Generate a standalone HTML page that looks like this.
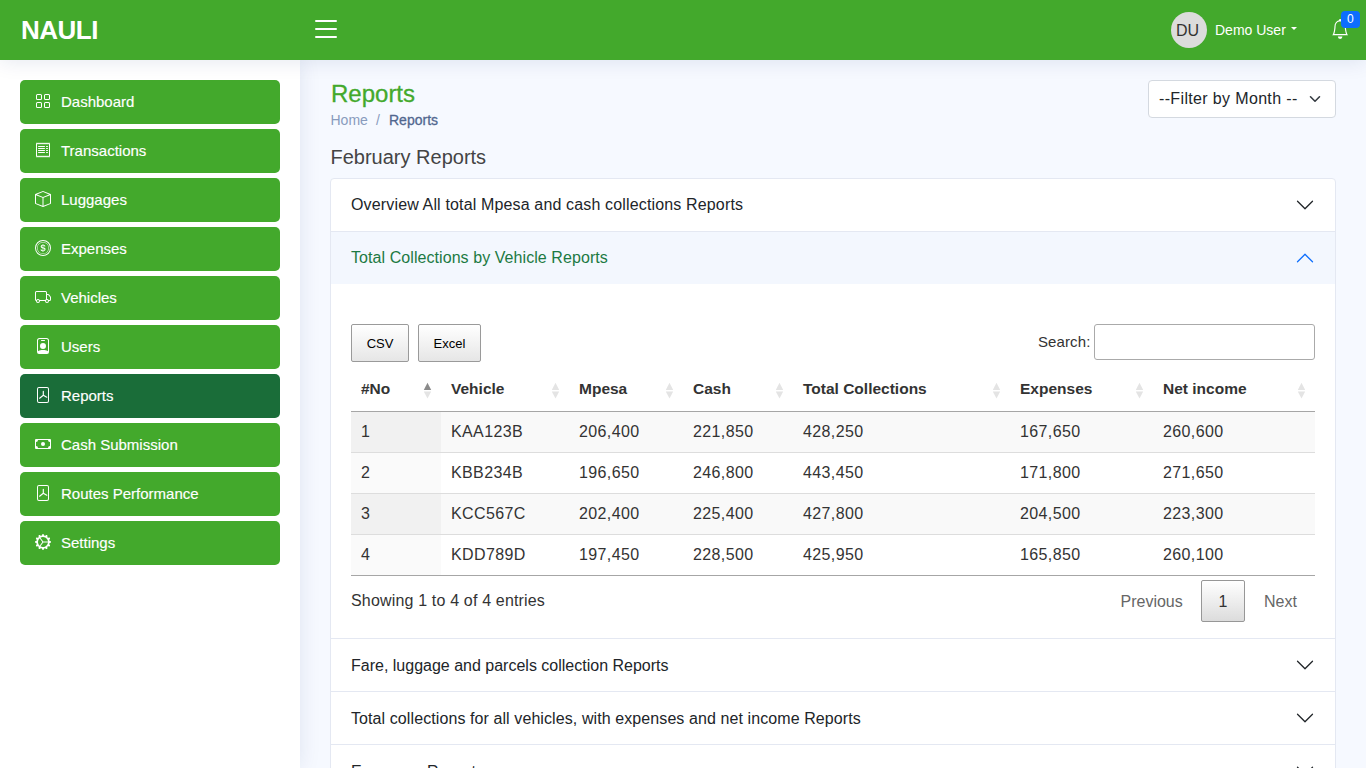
<!DOCTYPE html>
<html>
<head>
<meta charset="utf-8">
<style>
*{box-sizing:border-box;margin:0;padding:0}
html,body{width:1366px;height:768px;overflow:hidden}
body{font-family:"Liberation Sans",sans-serif;background:#f6f9ff;color:#212529;position:relative}
.abs{position:absolute}
.t{position:absolute;white-space:nowrap;line-height:1}
/* header */
#hdr{position:absolute;left:0;top:0;width:1366px;height:60px;background:#43a92c;box-shadow:0 2px 20px rgba(1,41,112,.1);z-index:5}
/* sidebar */
#side{position:absolute;left:0;top:60px;width:300px;height:708px;background:#fff;box-shadow:0 0 20px rgba(1,41,112,.1);z-index:3}
.nav{position:absolute;left:20px;width:260px;height:44px;background:#43a92c;border-radius:5px;color:#fff}
.nav.act{background:#1a6d39}
.nav svg{position:absolute;left:15px;top:13px;width:16px;height:16px}
.nav span{position:absolute;left:41px;top:14px;-webkit-text-stroke:0.15px #fff;font-size:15px;line-height:1;white-space:nowrap}
#main{position:absolute;left:300px;top:60px;width:1066px;height:708px}

#mainc{position:absolute;left:0;top:0;width:1366px;height:768px;z-index:1}
.btn{position:absolute;top:324px;height:38px;border:1px solid #9a9a9a;border-radius:2px;background:linear-gradient(#fff,#e6e6e6);font-size:13px;color:#000;text-align:center;line-height:37px}
.th{top:380.8px;font-size:15.5px;font-weight:bold;color:#333}
.td{font-size:16px;color:#333;letter-spacing:0.38px}
</style>
</head>
<body>
<div id="hdr">
  <div class="t" style="left:21px;top:17px;font-size:26px;font-weight:bold;color:#fff;letter-spacing:-0.5px">NAULI</div>
  <div class="abs" style="left:315px;top:20px;width:22px;height:2px;background:#fff;border-radius:1px"></div>
  <div class="abs" style="left:315px;top:28px;width:22px;height:2px;background:#fff;border-radius:1px"></div>
  <div class="abs" style="left:315px;top:36px;width:22px;height:2px;background:#fff;border-radius:1px"></div>
  <div class="abs" style="left:1171px;top:12px;width:36px;height:36px;border-radius:50%;background:#dcdcdc"></div>
  <div class="t" style="left:1176px;top:23px;font-size:16px;color:#333">DU</div>
  <div class="t" style="left:1215px;top:23px;font-size:14px;color:#fff">Demo User</div>
  <div class="abs" style="left:1290.5px;top:27.2px;width:0;height:0;border-left:3.6px solid transparent;border-right:3.6px solid transparent;border-top:3.6px solid #fff"></div>
  <svg class="abs" style="left:1330.86px;top:18.9px" width="18.3" height="19.9" viewBox="0 0 16 16" preserveAspectRatio="none"><path fill="#fff" d="M8 16a2 2 0 0 0 2-2H6a2 2 0 0 0 2 2zM8 1.918l-.797.161A4.002 4.002 0 0 0 4 6c0 .628-.134 2.197-.459 3.742-.16.767-.376 1.566-.663 2.258h10.244c-.287-.692-.502-1.49-.663-2.258C12.134 8.197 12 6.628 12 6a4.002 4.002 0 0 0-3.203-3.92L8 1.917zM14.22 12c.223.447.481.801.78 1H1c.299-.199.557-.553.78-1C2.68 10.2 3 6.88 3 6c0-2.42 1.72-4.44 4.005-4.901a1 1 0 1 1 1.99 0A5.002 5.002 0 0 1 13 6c0 .88.32 4.2 1.22 6z"/></svg>
  <div class="abs" style="left:1341px;top:11px;width:19px;height:17px;border-radius:4px;background:#0d6efd"></div>
  <div class="t" style="left:1347px;top:13px;font-size:12px;color:#fff">0</div>
</div>

<div id="side">
  <div class="nav" style="top:20px"><svg viewBox="0 0 16 16" fill="#fff"><path d="M1 2.5A1.5 1.5 0 0 1 2.5 1h3A1.5 1.5 0 0 1 7 2.5v3A1.5 1.5 0 0 1 5.5 7h-3A1.5 1.5 0 0 1 1 5.5v-3zM2.5 2a.5.5 0 0 0-.5.5v3a.5.5 0 0 0 .5.5h3a.5.5 0 0 0 .5-.5v-3a.5.5 0 0 0-.5-.5h-3zm6.5.5A1.5 1.5 0 0 1 10.5 1h3A1.5 1.5 0 0 1 15 2.5v3A1.5 1.5 0 0 1 13.5 7h-3A1.5 1.5 0 0 1 9 5.5v-3zm1.5-.5a.5.5 0 0 0-.5.5v3a.5.5 0 0 0 .5.5h3a.5.5 0 0 0 .5-.5v-3a.5.5 0 0 0-.5-.5h-3zM1 10.5A1.5 1.5 0 0 1 2.5 9h3A1.5 1.5 0 0 1 7 10.5v3A1.5 1.5 0 0 1 5.5 15h-3A1.5 1.5 0 0 1 1 13.5v-3zm1.5-.5a.5.5 0 0 0-.5.5v3a.5.5 0 0 0 .5.5h3a.5.5 0 0 0 .5-.5v-3a.5.5 0 0 0-.5-.5h-3zm6.5.5A1.5 1.5 0 0 1 10.5 9h3a1.5 1.5 0 0 1 1.5 1.5v3a1.5 1.5 0 0 1-1.5 1.5h-3A1.5 1.5 0 0 1 9 13.5v-3zm1.5-.5a.5.5 0 0 0-.5.5v3a.5.5 0 0 0 .5.5h3a.5.5 0 0 0 .5-.5v-3a.5.5 0 0 0-.5-.5h-3z"/></svg><span>Dashboard</span></div>
  <div class="nav" style="top:69px"><svg viewBox="0 0 16 16" fill="#fff"><path d="M1.92.506a.5.5 0 0 1 .434.14L3 1.293l.646-.647a.5.5 0 0 1 .708 0L5 1.293l.646-.647a.5.5 0 0 1 .708 0L7 1.293l.646-.647a.5.5 0 0 1 .708 0L9 1.293l.646-.647a.5.5 0 0 1 .708 0l.646.647.646-.647a.5.5 0 0 1 .708 0l.646.647.646-.647a.5.5 0 0 1 .801.13l.5 1A.5.5 0 0 1 15 2v12a.5.5 0 0 1-.053.224l-.5 1a.5.5 0 0 1-.8.13L13 14.707l-.646.647a.5.5 0 0 1-.708 0L11 14.707l-.646.647a.5.5 0 0 1-.708 0L9 14.707l-.646.647a.5.5 0 0 1-.708 0L7 14.707l-.646.647a.5.5 0 0 1-.708 0L5 14.707l-.646.647a.5.5 0 0 1-.708 0L3 14.707l-.646.647a.5.5 0 0 1-.801-.13l-.5-1A.5.5 0 0 1 1 14V2a.5.5 0 0 1 .053-.224l.5-1a.5.5 0 0 1 .367-.27zm.217 1.338L2 2.118v11.764l.137.274.51-.51a.5.5 0 0 1 .707 0l.646.647.646-.646a.5.5 0 0 1 .708 0l.646.646.646-.646a.5.5 0 0 1 .708 0l.646.646.646-.646a.5.5 0 0 1 .708 0l.646.646.646-.646a.5.5 0 0 1 .708 0l.646.646.646-.646a.5.5 0 0 1 .708 0l.509.509.137-.274V2.118l-.137-.274-.51.51a.5.5 0 0 1-.707 0L12 1.707l-.646.647a.5.5 0 0 1-.708 0L10 1.707l-.646.647a.5.5 0 0 1-.708 0L8 1.707l-.646.647a.5.5 0 0 1-.708 0L6 1.707l-.646.647a.5.5 0 0 1-.708 0L4 1.707l-.646.647a.5.5 0 0 1-.708 0l-.509-.51zM3 4.5a.5.5 0 0 1 .5-.5h6a.5.5 0 1 1 0 1h-6a.5.5 0 0 1-.5-.5zm0 2a.5.5 0 0 1 .5-.5h6a.5.5 0 1 1 0 1h-6a.5.5 0 0 1-.5-.5zm0 2a.5.5 0 0 1 .5-.5h6a.5.5 0 1 1 0 1h-6a.5.5 0 0 1-.5-.5zm0 2a.5.5 0 0 1 .5-.5h6a.5.5 0 0 1 0 1h-6a.5.5 0 0 1-.5-.5zm8-6a.5.5 0 0 1 .5-.5h1a.5.5 0 0 1 0 1h-1a.5.5 0 0 1-.5-.5zm0 2a.5.5 0 0 1 .5-.5h1a.5.5 0 0 1 0 1h-1a.5.5 0 0 1-.5-.5zm0 2a.5.5 0 0 1 .5-.5h1a.5.5 0 0 1 0 1h-1a.5.5 0 0 1-.5-.5zm0 2a.5.5 0 0 1 .5-.5h1a.5.5 0 0 1 0 1h-1a.5.5 0 0 1-.5-.5z"/></svg><span>Transactions</span></div>
  <div class="nav" style="top:118px"><svg viewBox="0 0 16 16" fill="#fff"><path d="M8.186 1.113a.5.5 0 0 0-.372 0L1.846 3.5 8 5.961 14.154 3.5 8.186 1.113zM15 4.239l-6.5 2.6v7.922l6.5-2.6V4.24zM7.5 14.762V6.838L1 4.239v7.923l6.5 2.6zM7.443.184a1.5 1.5 0 0 1 1.114 0l7.129 2.852A.5.5 0 0 1 16 3.5v8.662a1 1 0 0 1-.629.928l-7.185 2.874a.5.5 0 0 1-.372 0L.63 13.09a1 1 0 0 1-.63-.928V3.5a.5.5 0 0 1 .314-.464L7.443.184z"/></svg><span>Luggages</span></div>
  <div class="nav" style="top:167px"><svg viewBox="0 0 16 16" fill="#fff"><path d="M5.5 9.511c.076.954.83 1.697 2.182 1.785V12h.6v-.709c1.4-.098 2.218-.846 2.218-1.932 0-.987-.626-1.496-1.745-1.76l-.473-.112V5.57c.6.068.982.396 1.074.85h1.052c-.076-.919-.864-1.638-2.126-1.716V4h-.6v.719c-1.195.117-2.01.836-2.01 1.853 0 .9.606 1.472 1.613 1.707l.397.098v2.034c-.615-.093-1.022-.43-1.114-.9H5.5zm2.177-2.166c-.59-.137-.91-.416-.91-.836 0-.47.345-.822.915-.925v1.76h-.005zm.692 1.193c.717.166 1.048.435 1.048.91 0 .542-.412.914-1.135.982V8.518l.87.02z"/><path d="M8 15A7 7 0 1 1 8 1a7 7 0 0 1 0 14zm0 1A8 8 0 1 0 8 0a8 8 0 0 0 0 16z"/><path d="M8 13.5a5.5 5.5 0 1 1 0-11 5.5 5.5 0 0 1 0 11zm0 .5A6 6 0 1 0 8 2a6 6 0 0 0 0 12z"/></svg><span>Expenses</span></div>
  <div class="nav" style="top:216px"><svg viewBox="0 0 16 16" fill="#fff"><path d="M0 3.5A1.5 1.5 0 0 1 1.5 2h9A1.5 1.5 0 0 1 12 3.5V5h1.02a1.5 1.5 0 0 1 1.17.563l1.481 1.85a1.5 1.5 0 0 1 .329.938V10.5a1.5 1.5 0 0 1-1.5 1.5H14a2 2 0 1 1-4 0H5a2 2 0 1 1-3.998-.085A1.5 1.5 0 0 1 0 10.5v-7zm1.294 7.456A1.999 1.999 0 0 1 4.732 11h5.536a2.01 2.01 0 0 1 .732-.732V3.5a.5.5 0 0 0-.5-.5h-9a.5.5 0 0 0-.5.5v7a.5.5 0 0 0 .294.456zM12 10a2 2 0 0 1 1.732 1H14.5a.5.5 0 0 0 .5-.5V8.35a.5.5 0 0 0-.11-.312l-1.48-1.85A.5.5 0 0 0 13.02 6H12v4zm-9 1a1 1 0 1 0 0 2 1 1 0 0 0 0-2zm9 0a1 1 0 1 0 0 2 1 1 0 0 0 0-2z"/></svg><span>Vehicles</span></div>
  <div class="nav" style="top:265px"><svg viewBox="0 0 16 16" fill="#fff"><path d="M6.5 2a.5.5 0 0 0 0 1h3a.5.5 0 0 0 0-1h-3zM11 8a3 3 0 1 1-6 0 3 3 0 0 1 6 0z"/><path d="M4.5 0A2.5 2.5 0 0 0 2 2.5V14a2 2 0 0 0 2 2h8a2 2 0 0 0 2-2V2.5A2.5 2.5 0 0 0 11.5 0h-7zM3 2.5A1.5 1.5 0 0 1 4.5 1h7A1.5 1.5 0 0 1 13 2.5v10.795a4.2 4.2 0 0 0-.776-.492C11.392 12.387 10.063 12 8 12s-3.392.387-4.224.803a4.2 4.2 0 0 0-.776.492V2.5z"/></svg><span>Users</span></div>
  <div class="nav act" style="top:314px"><svg viewBox="0 0 16 16" fill="#fff"><path d="M4 0a2 2 0 0 0-2 2v12a2 2 0 0 0 2 2h8a2 2 0 0 0 2-2V2a2 2 0 0 0-2-2H4zm0 1h8a1 1 0 0 1 1 1v12a1 1 0 0 1-1 1H4a1 1 0 0 1-1-1V2a1 1 0 0 1 1-1z"/><path d="M8.3 4.2v4M8.3 8.2L4.6 11.2M8.3 8.2L11.8 10.2" fill="none" stroke="#fff" stroke-width="1.15" stroke-linecap="round"/></svg><span>Reports</span></div>
  <div class="nav" style="top:363px"><svg viewBox="0 0 16 16" fill="#fff"><path d="M8 10a2 2 0 1 0 0-4 2 2 0 0 0 0 4z"/><path d="M0 4a1 1 0 0 1 1-1h14a1 1 0 0 1 1 1v8a1 1 0 0 1-1 1H1a1 1 0 0 1-1-1V4zm3 0a2 2 0 0 1-2 2v4a2 2 0 0 1 2 2h10a2 2 0 0 1 2-2V6a2 2 0 0 1-2-2H3z"/></svg><span>Cash Submission</span></div>
  <div class="nav" style="top:412px"><svg viewBox="0 0 16 16" fill="#fff"><path d="M4 0a2 2 0 0 0-2 2v12a2 2 0 0 0 2 2h8a2 2 0 0 0 2-2V2a2 2 0 0 0-2-2H4zm0 1h8a1 1 0 0 1 1 1v12a1 1 0 0 1-1 1H4a1 1 0 0 1-1-1V2a1 1 0 0 1 1-1z"/><path d="M8.3 4.2v4M8.3 8.2L4.6 11.2M8.3 8.2L11.8 10.2" fill="none" stroke="#fff" stroke-width="1.15" stroke-linecap="round"/></svg><span>Routes Performance</span></div>
  <div class="nav" style="top:461px"><svg viewBox="0 0 16 16" fill="#fff"><path d="M7.068.727c.243-.97 1.62-.97 1.864 0l.071.286a.96.96 0 0 0 1.622.434l.205-.211c.695-.719 1.888-.03 1.613.931l-.08.284a.96.96 0 0 0 1.187 1.187l.283-.081c.96-.275 1.65.918.931 1.613l-.211.205a.96.96 0 0 0 .434 1.622l.286.071c.97.243.97 1.62 0 1.864l-.286.071a.96.96 0 0 0-.434 1.622l.211.205c.719.695.03 1.888-.931 1.613l-.284-.08a.96.96 0 0 0-1.187 1.187l.081.283c.275.96-.918 1.65-1.613.931l-.205-.211a.96.96 0 0 0-1.622.434l-.071.286c-.243.97-1.62.97-1.864 0l-.071-.286a.96.96 0 0 0-1.622-.434l-.205.211c-.695.719-1.888.03-1.613-.931l.08-.284a.96.96 0 0 0-1.186-1.187l-.284.081c-.96.275-1.65-.918-.931-1.613l.211-.205a.96.96 0 0 0-.434-1.622l-.286-.071c-.97-.243-.97-1.62 0-1.864l.286-.071a.96.96 0 0 0 .434-1.622l-.211-.205c-.719-.695-.03-1.888.931-1.613l.284.08a.96.96 0 0 0 1.187-1.186l-.081-.284c-.275-.96.918-1.65 1.613-.931l.205.211a.96.96 0 0 0 1.622-.434l.071-.286zM12.973 8.5H8.25l-2.834 3.779A4.998 4.998 0 0 0 12.973 8.5zm0-1a4.998 4.998 0 0 0-7.557-3.779l2.834 3.78h4.723zM5.048 3.967c-.03.021-.058.043-.087.065l.087-.065zm-.431.355A4.984 4.984 0 0 0 3.002 8c0 1.455.622 2.765 1.615 3.678L7.375 8 4.617 4.322zm.344 7.646.087.065-.087-.065z"/></svg><span>Settings</span></div>
</div>


<div id="mainc">
  <div class="t" style="left:331px;top:82px;font-size:24px;color:#43a92c;-webkit-text-stroke:0.3px #43a92c">Reports</div>
  <div class="t" style="left:330.5px;top:113px;font-size:14px;color:#899bbd">Home</div>
  <div class="t" style="left:376px;top:113px;font-size:14px;color:#899bbd">/</div>
  <div class="t" style="left:389px;top:113px;font-size:14px;color:#51678f;-webkit-text-stroke:0.3px #51678f">Reports</div>
  <div class="abs" style="left:1148px;top:80px;width:188px;height:38px;background:#fff;border:1px solid #d4d9e0;border-radius:4px"></div>
  <div class="t" style="left:1159px;top:91px;font-size:16px;color:#212529;letter-spacing:0.35px">--Filter by Month --</div>
  <svg class="abs" style="left:1309px;top:92.75px" width="12" height="12" viewBox="0 0 16 16"><path d="M2 5l6 6 6-6" fill="none" stroke="#343a40" stroke-width="2.1" stroke-linecap="round" stroke-linejoin="round"/></svg>
  <div class="t" style="left:330.5px;top:146.6px;font-size:20px;color:#444">February Reports</div>

  <div class="abs" id="acc" style="left:330px;top:178px;width:1006px;height:600px;background:#fff;border:1px solid #e4e8f2;border-radius:4px;overflow:hidden">
    <div class="abs" style="left:0;top:52px;width:1004px;height:1px;background:#e4e8f2"></div>
    <div class="abs" style="left:0;top:53px;width:1004px;height:52px;background:#f3f7fe"></div>
    <div class="abs" style="left:0;top:459px;width:1004px;height:1px;background:#e4e8f2"></div>
    <div class="abs" style="left:0;top:512px;width:1004px;height:1px;background:#e4e8f2"></div>
    <div class="abs" style="left:0;top:565px;width:1004px;height:1px;background:#e4e8f2"></div>
  </div>
  <div class="t" style="left:351px;top:197px;font-size:16px;color:#212529;letter-spacing:0.15px">Overview All total Mpesa and cash collections Reports</div>
  <svg class="abs" style="left:1295px;top:195px" width="20" height="20" viewBox="0 0 16 16"><path d="M1.646 4.646a.5.5 0 0 1 .708 0L8 10.293l5.646-5.647a.5.5 0 0 1 .708.708l-6 6a.5.5 0 0 1-.708 0l-6-6a.5.5 0 0 1 0-.708z" fill="#212529"/></svg>
  <div class="t" style="left:351px;top:250px;font-size:16px;color:#1c7a43;letter-spacing:0.07px">Total Collections by Vehicle Reports</div>
  <svg class="abs" style="left:1295px;top:248px" width="20" height="20" viewBox="0 0 16 16"><path d="M1.646 11.354a.5.5 0 0 0 .708 0L8 5.707l5.646 5.647a.5.5 0 0 0 .708-.708l-6-6a.5.5 0 0 0-.708 0l-6 6a.5.5 0 0 0 0 .708z" fill="#0d6efd"/></svg>

  <div class="btn" style="left:351px;width:58px">CSV</div>
  <div class="btn" style="left:418px;width:63px">Excel</div>
  <div class="t" style="left:1038px;top:334px;font-size:15px;color:#333;letter-spacing:0.1px">Search:</div>
  <div class="abs" style="left:1094px;top:324px;width:221px;height:36px;border:1px solid #aaa;border-radius:3px;background:#fff"></div>

  <div class="abs" style="left:351px;top:411px;width:964px;height:1px;background:#a6a6a6"></div>
  <div class="abs" style="left:351px;top:412px;width:964px;height:41px;background:#f9f9f9"></div>
  <div class="abs" style="left:351px;top:412px;width:90px;height:41px;background:#f1f1f1"></div>
  <div class="abs" style="left:351px;top:453px;width:90px;height:41px;background:#fafafa"></div>
  <div class="abs" style="left:351px;top:494px;width:964px;height:41px;background:#f9f9f9"></div>
  <div class="abs" style="left:351px;top:494px;width:90px;height:41px;background:#f1f1f1"></div>
  <div class="abs" style="left:351px;top:535px;width:90px;height:41px;background:#fafafa"></div>
  <div class="abs" style="left:351px;top:452px;width:964px;height:1px;background:#ddd"></div>
  <div class="abs" style="left:351px;top:493px;width:964px;height:1px;background:#ddd"></div>
  <div class="abs" style="left:351px;top:534px;width:964px;height:1px;background:#ddd"></div>
  <div class="abs" style="left:351px;top:575px;width:964px;height:1px;background:#a6a6a6"></div>
  <svg class="abs" style="left:0;top:0" width="1366" height="768"><polygon points="427.5,382.8 431.2,390 423.8,390" fill="#8a8a8a"/><polygon points="423.8,391.4 431.2,391.4 427.5,398.4" fill="#e4e4e4"/><polygon points="555.5,382.8 559.2,390 551.8,390" fill="#e4e4e4"/><polygon points="551.8,391.4 559.2,391.4 555.5,398.4" fill="#e4e4e4"/><polygon points="669.5,382.8 673.2,390 665.8,390" fill="#e4e4e4"/><polygon points="665.8,391.4 673.2,391.4 669.5,398.4" fill="#e4e4e4"/><polygon points="779.5,382.8 783.2,390 775.8,390" fill="#e4e4e4"/><polygon points="775.8,391.4 783.2,391.4 779.5,398.4" fill="#e4e4e4"/><polygon points="996.5,382.8 1000.2,390 992.8,390" fill="#e4e4e4"/><polygon points="992.8,391.4 1000.2,391.4 996.5,398.4" fill="#e4e4e4"/><polygon points="1139.5,382.8 1143.2,390 1135.8,390" fill="#e4e4e4"/><polygon points="1135.8,391.4 1143.2,391.4 1139.5,398.4" fill="#e4e4e4"/><polygon points="1301.5,382.8 1305.2,390 1297.8,390" fill="#e4e4e4"/><polygon points="1297.8,391.4 1305.2,391.4 1301.5,398.4" fill="#e4e4e4"/></svg>
  <div class="t th" style="left:361px">#No</div>
  <div class="t th" style="left:451px">Vehicle</div>
  <div class="t th" style="left:579px">Mpesa</div>
  <div class="t th" style="left:693px">Cash</div>
  <div class="t th" style="left:803px">Total Collections</div>
  <div class="t th" style="left:1020px">Expenses</div>
  <div class="t th" style="left:1163px">Net income</div>
  <div class="t td" style="left:361px;top:423.7px">1</div>
  <div class="t td" style="left:451px;top:423.7px">KAA123B</div>
  <div class="t td" style="left:579px;top:423.7px">206,400</div>
  <div class="t td" style="left:693px;top:423.7px">221,850</div>
  <div class="t td" style="left:803px;top:423.7px">428,250</div>
  <div class="t td" style="left:1020px;top:423.7px">167,650</div>
  <div class="t td" style="left:1163px;top:423.7px">260,600</div>
  <div class="t td" style="left:361px;top:464.7px">2</div>
  <div class="t td" style="left:451px;top:464.7px">KBB234B</div>
  <div class="t td" style="left:579px;top:464.7px">196,650</div>
  <div class="t td" style="left:693px;top:464.7px">246,800</div>
  <div class="t td" style="left:803px;top:464.7px">443,450</div>
  <div class="t td" style="left:1020px;top:464.7px">171,800</div>
  <div class="t td" style="left:1163px;top:464.7px">271,650</div>
  <div class="t td" style="left:361px;top:505.7px">3</div>
  <div class="t td" style="left:451px;top:505.7px">KCC567C</div>
  <div class="t td" style="left:579px;top:505.7px">202,400</div>
  <div class="t td" style="left:693px;top:505.7px">225,400</div>
  <div class="t td" style="left:803px;top:505.7px">427,800</div>
  <div class="t td" style="left:1020px;top:505.7px">204,500</div>
  <div class="t td" style="left:1163px;top:505.7px">223,300</div>
  <div class="t td" style="left:361px;top:546.7px">4</div>
  <div class="t td" style="left:451px;top:546.7px">KDD789D</div>
  <div class="t td" style="left:579px;top:546.7px">197,450</div>
  <div class="t td" style="left:693px;top:546.7px">228,500</div>
  <div class="t td" style="left:803px;top:546.7px">425,950</div>
  <div class="t td" style="left:1020px;top:546.7px">165,850</div>
  <div class="t td" style="left:1163px;top:546.7px">260,100</div>

  <div class="t" style="left:351px;top:592.6px;font-size:16px;color:#333;letter-spacing:0.17px">Showing 1 to 4 of 4 entries</div>
  <div class="t" style="left:1120.5px;top:593.8px;font-size:16px;color:#666">Previous</div>
  <div class="abs" style="left:1201px;top:580px;width:44px;height:42px;border:1px solid #979797;border-radius:2px;background:linear-gradient(#fff,#dcdcdc)"></div>
  <div class="t" style="left:1218.5px;top:593.8px;font-size:16px;color:#333">1</div>
  <div class="t" style="left:1264px;top:593.8px;font-size:16px;color:#666">Next</div>
  <div class="t" style="left:351px;top:657.5px;font-size:16px;color:#212529;letter-spacing:0px">Fare, luggage and parcels collection Reports</div>
  <div class="t" style="left:351px;top:710.5px;font-size:16px;color:#212529;letter-spacing:0.09px">Total collections for all vehicles, with expenses and net income Reports</div>
  <div class="t" style="left:351px;top:763.5px;font-size:16px;color:#212529;letter-spacing:0.15px">Expenses Reports</div>
  <svg class="abs" style="left:1295px;top:655px" width="20" height="20" viewBox="0 0 16 16"><path d="M1.646 4.646a.5.5 0 0 1 .708 0L8 10.293l5.646-5.647a.5.5 0 0 1 .708.708l-6 6a.5.5 0 0 1-.708 0l-6-6a.5.5 0 0 1 0-.708z" fill="#212529"/></svg>
  <svg class="abs" style="left:1295px;top:708px" width="20" height="20" viewBox="0 0 16 16"><path d="M1.646 4.646a.5.5 0 0 1 .708 0L8 10.293l5.646-5.647a.5.5 0 0 1 .708.708l-6 6a.5.5 0 0 1-.708 0l-6-6a.5.5 0 0 1 0-.708z" fill="#212529"/></svg>
  <svg class="abs" style="left:1295px;top:761px" width="20" height="20" viewBox="0 0 16 16"><path d="M1.646 4.646a.5.5 0 0 1 .708 0L8 10.293l5.646-5.647a.5.5 0 0 1 .708.708l-6 6a.5.5 0 0 1-.708 0l-6-6a.5.5 0 0 1 0-.708z" fill="#212529"/></svg>
</div>

</body>
</html>
